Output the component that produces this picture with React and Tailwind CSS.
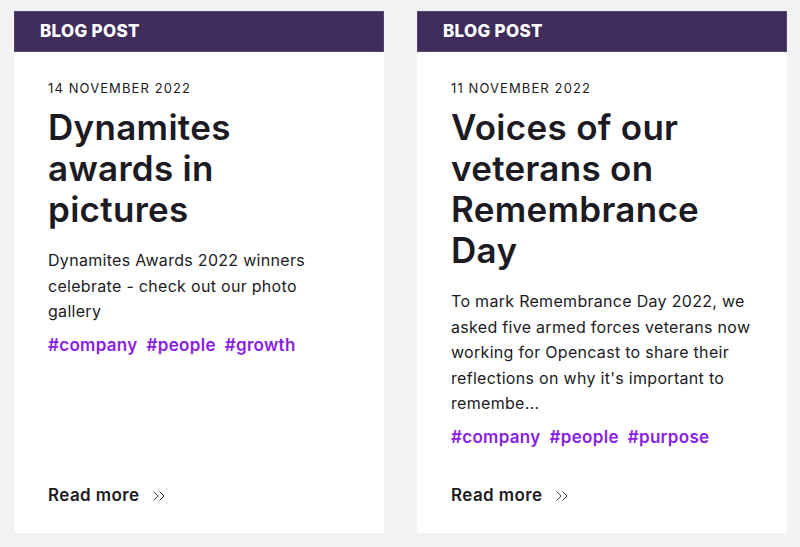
import React from 'react';
import { ChevronsRight } from 'lucide-react';

const posts = [
  {
    date: '14 November 2022',
    title: 'Dynamites awards in pictures',
    excerpt: 'Dynamites Awards 2022 winners celebrate - check out our photo gallery',
    tags: ['company', 'people', 'growth'],
  },
  {
    date: '11 November 2022',
    title: 'Voices of our veterans on Remembrance Day',
    excerpt:
      "To mark Remembrance Day 2022, we asked five armed forces veterans now working for Opencast to share their reflections on why it's important to remembe...",
    tags: ['company', 'people', 'purpose'],
  },
];

function PostCard({ post }) {
  return (
    <article className="w-[370px] bg-white flex flex-col">
      <div className="h-[41px] bg-[#3f2c5b] border border-[#554471] flex items-center pl-[25px] pt-[1px]">
        <span className="text-white font-extrabold text-[17px] tracking-[0.3px] uppercase">Blog post</span>
      </div>
      <div className="flex flex-col flex-1 pl-[34px] pr-[32px] pt-[26px] pb-[25px]">
        <p className="text-[13px] leading-[20px] tracking-[1.1px] uppercase text-[#1c1b24]">{post.date}</p>
        <h2 className="mt-[9px] text-[35px] leading-[41px] font-semibold tracking-[0.3px] text-[#1c1b24]">
          {post.title}
        </h2>
        <p className="mt-[18px] text-[16px] leading-[25.5px] tracking-[0.3px] text-[#1c1b24]">{post.excerpt}</p>
        <div className="mt-[8px] flex gap-[9px] text-[17px] leading-[25px] font-semibold tracking-[0.3px] text-[#8a1ee6]">
          {post.tags.map((t) => (
            <span key={t}>#{t}</span>
          ))}
        </div>
        <div className="mt-auto flex items-center gap-[10px] text-[#1c1b24]">
          <span className="text-[17px] leading-[25px] font-semibold tracking-[0.4px]">Read more</span>
          <ChevronsRight size={20} strokeWidth={1.1} />
        </div>
      </div>
    </article>
  );
}

export default function App() {
  return (
    <div
      className="min-h-[547px] bg-[#f2f2f4] flex gap-[33px] pl-[14px] pt-[11px] pb-[14px]"
      style={{ fontFamily: 'Inter, "Noto Sans", sans-serif' }}
    >
      {posts.map((p) => (
        <PostCard key={p.date} post={p} />
      ))}
    </div>
  );
}
